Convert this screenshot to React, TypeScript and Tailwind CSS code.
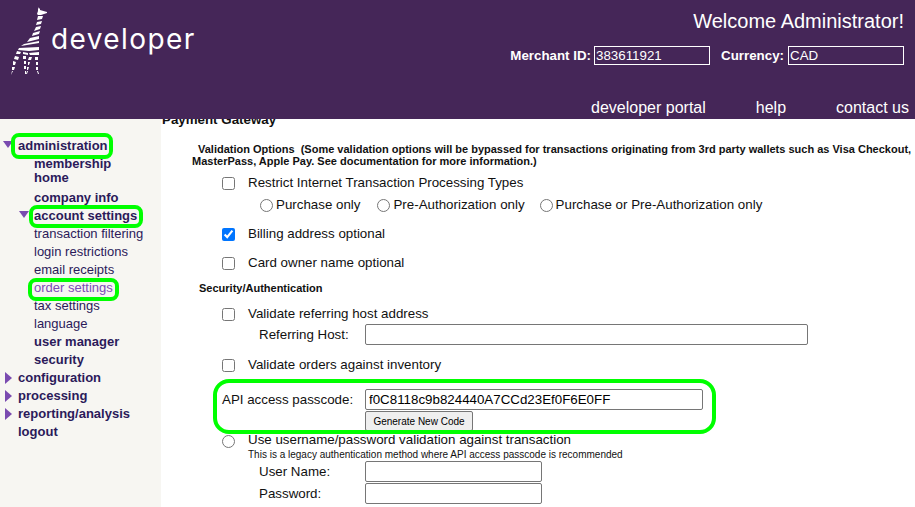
import type { ReactNode } from "react";

const arial = { fontFamily: '"Liberation Sans", Arial, sans-serif' };

function Giraffe() {
  return (
    <svg width="38" height="68" viewBox="0 0 38 68" className="shrink-0" fill="#fff">
      <path d="M27 0l1 2 1-1 0 2 7 2 0 1-6 2-3 0-1-1 1-3z" />
      <path d="M27 9h5l-1 3-5 1z" />
      <path d="M26 15l5-1-1 3-5 1z" />
      <path d="M25 20l5-1-1 3-6 2z" />
      <path d="M22 26l7-2-1 3-7 2z" />
      <path d="M19 31l9-2 0 3-12 3z" />
      <path d="M13 37l15-3 0 2-18 3z" />
      <path d="M8 41l20-1 0 3-10 1-11-1z" />
      <path d="M6 44l4 1-1 2-4 0z" />
      <path d="M12 45l5 1 0 2-5-1z" />
      <path d="M18 46l10-1 0 3-9 0z" />
      <path d="M4 49l4 1-1 3-4-1z" />
      <path d="M12 49l3 0 0 3-3 0z" />
      <path d="M18 50l3 0-1 3-3 0z" />
      <path d="M24 50l3 0 0 3-3 0z" />
      <path d="M2 54l3 1-1 3-2 0z" />
      <path d="M13 54l2 0 0 3-2 0z" />
      <path d="M17 55l2 0-1 3-1 0z" />
      <path d="M25 55l2 0 0 3-2 0z" />
      <path d="M1 60l3 0-1 3-2 0z" />
      <path d="M13 59l2 0 0 3-2 0z" />
      <path d="M16 60l2 0-1 3-1 0z" />
      <path d="M25 60l2 0 0 3-2 0z" />
      <path d="M1 64l1 0-2 4 0 0z" />
      <path d="M14 64l1 0 0 3-1 0z" />
      <path d="M16 64l1 0-1 3-1 0z" />
      <path d="M26 64l1 0 1 3-1 0z" />
    </svg>
  );
}

function Ring({ className }: { className: string }) {
  return <span className={`absolute pointer-events-none border-[4px] border-[#0f0] rounded-[8px] ${className}`} />;
}

function ArrowDown({ className }: { className: string }) {
  return (
    <svg width="10" height="7" viewBox="0 0 10 7" className={className}>
      <path d="M0 0h10L5 7z" fill="#7a4bb0" />
    </svg>
  );
}

function ArrowRight() {
  return (
    <svg width="7" height="12" viewBox="0 0 7 12" className="absolute left-[5px] top-[3px]">
      <path d="M0 0l7 6-7 6z" fill="#7a4bb0" />
    </svg>
  );
}

function NavRow({
  children,
  sub,
  weight = "font-bold",
  color = "text-[#2b1a5a]",
}: {
  children: ReactNode;
  sub?: boolean;
  weight?: string;
  color?: string;
}) {
  return (
    <div className={`relative h-[18px] leading-[18px] whitespace-nowrap ${sub ? "pl-[34px]" : "pl-[18px]"} ${weight} ${color}`}>
      {children}
    </div>
  );
}

function Sidebar() {
  return (
    <aside className="w-[161px] shrink-0 bg-[#f7f6f2] pt-[18px] text-[13px]">
      <NavRow>
        <ArrowDown className="absolute left-[3px] top-[4px]" />
        administration
        <Ring className="left-[11px] top-[-4px] w-[102px] h-[26px]" />
      </NavRow>
      <div className="pl-[34px] font-bold text-[#2b1a5a] leading-[14px] pt-[2px] pb-[4px]">
        membership
        <br />
        home
      </div>
      <NavRow sub>company info</NavRow>
      <NavRow sub>
        <ArrowDown className="absolute left-[19px] top-[4px]" />
        account settings
        <Ring className="left-[29px] top-[-2px] w-[114px] h-[23px]" />
      </NavRow>
      <NavRow sub weight="font-normal">transaction filtering</NavRow>
      <NavRow sub weight="font-normal">login restrictions</NavRow>
      <NavRow sub weight="font-normal">email receipts</NavRow>
      <NavRow sub weight="font-normal" color="text-[#7b4bb5]">
        order settings
        <Ring className="left-[28px] top-[-1px] w-[91px] h-[23px]" />
      </NavRow>
      <NavRow sub weight="font-normal">tax settings</NavRow>
      <NavRow sub weight="font-normal">language</NavRow>
      <NavRow sub>user manager</NavRow>
      <NavRow sub>security</NavRow>
      <NavRow><ArrowRight />configuration</NavRow>
      <NavRow><ArrowRight />processing</NavRow>
      <NavRow><ArrowRight />reporting/analysis</NavRow>
      <NavRow>logout</NavRow>
    </aside>
  );
}

function CheckRow({ label, checked, className }: { label: string; checked?: boolean; className: string }) {
  return (
    <label className={`flex items-center pl-[61px] h-[18px] ${className}`}>
      <input type="checkbox" defaultChecked={checked} className="w-[13px] h-[13px] m-0 accent-[#0075ff]" />
      <span className="ml-[13px]">{label}</span>
    </label>
  );
}

function Radio({ label, className = "" }: { label: string; className?: string }) {
  return (
    <label className={`flex items-center ${className}`}>
      <input type="radio" name="txn" className="w-[13px] h-[13px] m-0" />
      <span className="ml-[3px]">{label}</span>
    </label>
  );
}

const field = "h-[21px] border border-[#767676] rounded-[2px] bg-white px-[3px] text-[13.33px] text-black outline-none";

function Main() {
  return (
    <main className="flex-1 min-w-0 overflow-hidden bg-white text-[13.33px] text-[#111]">
      <div className="-mt-[6px] pl-[1px] font-bold text-[13.33px] leading-[14px] whitespace-nowrap">Payment Gateway</div>
      <div className="mt-[16px] pl-[31px] font-bold text-[11px] leading-[12px] whitespace-nowrap">
        <div className="pl-[6px]">Validation Options&nbsp; (Some validation options will be bypassed for transactions originating from 3rd party wallets such as Visa Checkout,</div>
        <div>MasterPass, Apple Pay. See documentation for more information.)</div>
      </div>
      <CheckRow className="mt-[7px]" label="Restrict Internet Transaction Processing Types" />
      <div className="flex pl-[99px] mt-[4px] h-[18px]">
        <Radio label="Purchase only" />
        <Radio className="ml-[17px]" label="Pre-Authorization only" />
        <Radio className="ml-[15px]" label="Purchase or Pre-Authorization only" />
      </div>
      <CheckRow className="mt-[11px]" label="Billing address optional" checked />
      <CheckRow className="mt-[11px]" label="Card owner name optional" />
      <div className="mt-[9px] pl-[38px] font-bold text-[11px] leading-[14px]">Security/Authentication</div>
      <CheckRow className="mt-[10px]" label="Validate referring host address" />
      <div className="flex items-center mt-[1px] h-[21px]">
        <span className="pl-[98px] w-[204px]">Referring Host:</span>
        <input className={`${field} w-[443px]`} />
      </div>
      <CheckRow className="mt-[11px]" label="Validate orders against inventory" />
      <div className="relative mt-[15px] pl-[61px]">
        <span className="absolute pointer-events-none border-[4px] border-[#0f0] left-[52px] top-[-10px] w-[503px] h-[55px] rounded-[16px]" />
        <div className="flex items-center h-[21px]">
          <span className="w-[143px]">API access passcode:</span>
          <input className={`${field} w-[338px]`} defaultValue="f0C8118c9b824440A7CCd23Ef0F6E0FF" />
        </div>
        <button className="block ml-[143px] mt-[1px] w-[108px] h-[20px] bg-[#efefef] border border-[#767676] rounded-[2px] text-[10px] text-black">
          Generate New Code
        </button>
      </div>
      <label className="flex items-center pl-[61px] h-[18px]">
        <input type="radio" className="w-[13px] h-[13px] m-0 mt-[3px]" />
        <span className="ml-[13px]">Use username/password validation against transaction</span>
      </label>
      <div className="pl-[87px] text-[10px] leading-[11px] whitespace-nowrap">This is a legacy authentication method where API access passcode is recommended</div>
      <div className="flex items-center h-[21px] mt-[1px]">
        <span className="pl-[98px] w-[204px]">User Name:</span>
        <input className={`${field} w-[177px]`} />
      </div>
      <div className="flex items-center h-[21px] mt-[1px]">
        <span className="pl-[98px] w-[204px]">Password:</span>
        <input className={`${field} w-[177px]`} />
      </div>
    </main>
  );
}

function Header() {
  return (
    <header className="h-[119px] shrink-0 bg-[#452658] text-white flex justify-between">
      <div className="flex items-start pl-[11px] pt-[7px]">
        <Giraffe />
        <span className="ml-[2px] mt-[16px] text-[28px] leading-[32px] font-normal tracking-[1.4px]" style={{ fontFamily: "Inter, sans-serif" }}>developer</span>
      </div>
      <div className="flex flex-col items-end pr-[6px]">
        <div className="mt-[9px] pr-[5px] text-[20px] leading-[24px]">Welcome Administrator!</div>
        <div className="flex items-center mt-[13px] pr-[5px] text-[13.33px] font-bold h-[19px]">
          <span>Merchant ID:</span>
          <span className="ml-[3px] w-[116px] h-[19px] border border-white px-[1px] font-normal leading-[17px]">383611921</span>
          <span className="ml-[11px]">Currency:</span>
          <span className="ml-[4px] w-[116px] h-[19px] border border-white px-[1px] font-normal leading-[17px]">CAD</span>
        </div>
        <nav className="flex gap-[50px] mt-[33px] text-[16px] leading-[20px]">
          <span>developer portal</span>
          <span>help</span>
          <span>contact us</span>
        </nav>
      </div>
    </header>
  );
}

export default function App() {
  return (
    <div className="w-[915px] h-[507px] overflow-hidden flex flex-col bg-white" style={arial}>
      <Header />
      <div className="flex flex-1 min-h-0">
        <Sidebar />
        <Main />
      </div>
    </div>
  );
}
